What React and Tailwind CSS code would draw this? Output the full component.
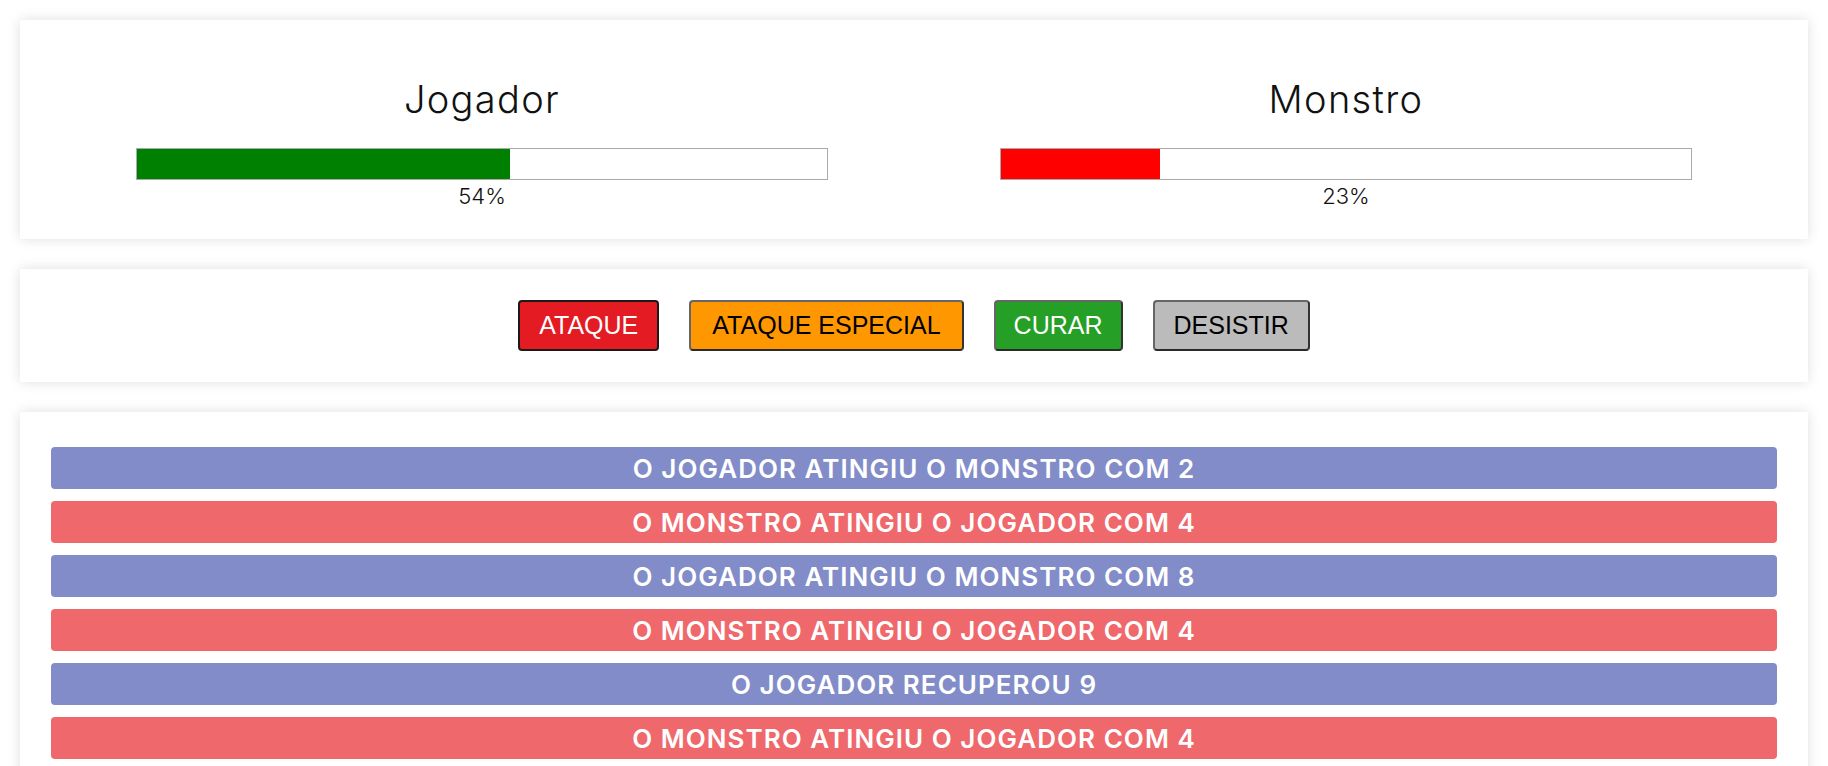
import React from "react";

const logs = [
  { who: "player", text: "O jogador atingiu o monstro com 2" },
  { who: "monster", text: "O monstro atingiu o jogador com 4" },
  { who: "player", text: "O jogador atingiu o monstro com 8" },
  { who: "monster", text: "O monstro atingiu o jogador com 4" },
  { who: "player", text: "O jogador recuperou 9" },
  { who: "monster", text: "O monstro atingiu o jogador com 4" },
];

function Score({ name, life, color }) {
  return (
    <div className="flex flex-1 flex-col items-center">
      <h1 className="mt-[27px] text-[38px] leading-[45px] font-light text-[#111] tracking-[0.035em]">
        {name}
      </h1>
      <div className="mt-[26px] h-[32px] w-[80%] border border-[#aaa]">
        <div className={`h-full ${color}`} style={{ width: `${life}%` }} />
      </div>
      <div className="mt-[4px] text-[22px] leading-[25px] font-light text-[#111]">{life}%</div>
    </div>
  );
}

export default function App() {
  return (
    <div
      className="bg-white p-5"
      style={{ fontFamily: "Inter, 'Noto Sans', sans-serif" }}
    >
      <div className="flex bg-white px-[30px] pt-[30px] pb-[30px] shadow-[0_0_12px_rgba(0,0,0,0.13)]">
        <Score name="Jogador" life={54} color="bg-[#008000]" />
        <Score name="Monstro" life={23} color="bg-[#ff0000]" />
      </div>

      <div
        className="mt-[30px] flex justify-center gap-[30px] bg-white py-[31px] shadow-[0_0_12px_rgba(0,0,0,0.13)]"
        style={{ fontFamily: "'Liberation Sans', Arial, sans-serif" }}
      >
        <button className="rounded-[4px] border-2 border-[#1a1a1a] bg-[#e41b23] px-[19px] py-[9px] text-[25px] leading-[29px] text-white">
          ATAQUE
        </button>
        <button className="rounded-[4px] border-2 border-[#666] border-b-[#2a2a2a] border-r-[#333] bg-[#ff9800] px-[21px] py-[9px] text-[25px] leading-[29px] text-black">
          ATAQUE ESPECIAL
        </button>
        <button className="rounded-[4px] border-2 border-[#666] border-b-[#2a2a2a] border-r-[#333] bg-[#269f27] px-[18px] py-[9px] text-[25px] leading-[29px] text-white">
          CURAR
        </button>
        <button className="rounded-[4px] border-2 border-[#666] border-b-[#2a2a2a] border-r-[#333] bg-[#bbbbbb] px-[19px] py-[9px] text-[25px] leading-[29px] text-black">
          DESISTIR
        </button>
      </div>

      <div className="mt-[30px] bg-white px-[31px] pt-[35px] pb-[30px] shadow-[0_0_12px_rgba(0,0,0,0.13)]">
        <ul className="flex flex-col gap-[12px]">
          {logs.map((l, i) => (
            <li
              key={i}
              className={`rounded-[4px] h-[42px] flex items-center justify-center text-[26px] font-semibold tracking-[0.04em] uppercase text-white ${
                l.who === "player" ? "bg-[#818cc9]" : "bg-[#ef686b]"
              }`}
            >
              {l.text}
            </li>
          ))}
        </ul>
      </div>
    </div>
  );
}
